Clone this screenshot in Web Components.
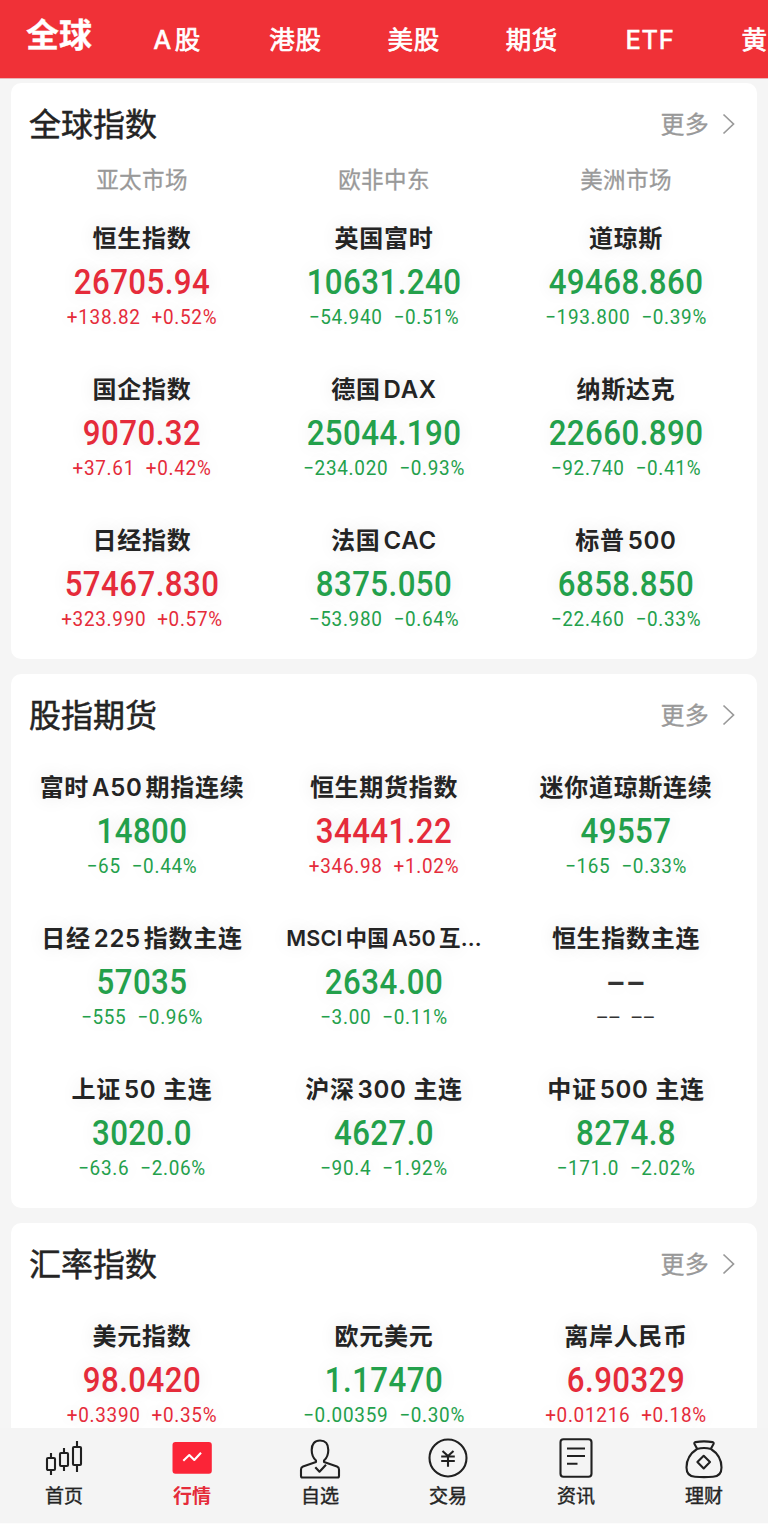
<!DOCTYPE html>
<html lang="zh-CN">
<head>
<meta charset="utf-8">
<meta name="viewport" content="width=device-width">
<title>行情</title>
<style>
body {
    margin: 0;
    font-family: Inter, 'Noto Sans CJK SC', sans-serif;
    color: #242424;
    background: #f5f5f5;
}
</style>
</head>
<body>
<market-page></market-page>
<script>
const UP = '#e52b3a';
const DOWN = '#23a04b';

const tabs = ['全球', 'A股', '港股', '美股', '期货', 'ETF', '黄'];

// name, value, change, percent
const cards = [
    {
        title: '全球指数',
        regions: ['亚太市场', '欧非中东', '美洲市场'],
        rows: [
            ['恒生指数', '26705.94', '+138.82', '+0.52%'],
            ['英国富时', '10631.240', '−54.940', '−0.51%'],
            ['道琼斯', '49468.860', '−193.800', '−0.39%'],
            ['国企指数', '9070.32', '+37.61', '+0.42%'],
            ['德国DAX', '25044.190', '−234.020', '−0.93%'],
            ['纳斯达克', '22660.890', '−92.740', '−0.41%'],
            ['日经指数', '57467.830', '+323.990', '+0.57%'],
            ['法国CAC', '8375.050', '−53.980', '−0.64%'],
            ['标普500', '6858.850', '−22.460', '−0.33%'],
        ],
    },
    {
        title: '股指期货',
        rows: [
            ['富时A50期指连续', '14800', '−65', '−0.44%'],
            ['恒生期货指数', '34441.22', '+346.98', '+1.02%'],
            ['迷你道琼斯连续', '49557', '−165', '−0.33%'],
            ['日经225指数主连', '57035', '−555', '−0.96%'],
            ['MSCI中国A50互...', '2634.00', '−3.00', '−0.11%'],
            ['恒生指数主连', '--', '--', '--'],
            ['上证50 主连', '3020.0', '−63.6', '−2.06%'],
            ['沪深300 主连', '4627.0', '−90.4', '−1.92%'],
            ['中证500 主连', '8274.8', '−171.0', '−2.02%'],
        ],
    },
    {
        title: '汇率指数',
        rows: [
            ['美元指数', '98.0420', '+0.3390', '+0.35%'],
            ['欧元美元', '1.17470', '−0.00359', '−0.30%'],
            ['离岸人民币', '6.90329', '+0.01216', '+0.18%'],
        ],
    },
];

const icons = {
    candles: `<path d="M7 13v5M7 30v5M20 8v5M20 26v5M33 1v6M33 25v7"/><rect x="3" y="18" width="8" height="12" rx="1"/><rect x="16" y="13" width="8" height="13" rx="1"/><rect x="29" y="7" width="8" height="18" rx="1"/>`,
    market: `<rect x=".5" y="2" width="39.300" height="31.700" rx="3" fill="#fb2437" stroke="none"/><path d="M11.300 20.700l6-5.700 5 5 6.700-7.300" stroke="#fff"/>`,
    person: `<path d="M16 20.500c-3.500-3-4.300-6-4.300-10.500 0-6 3-9.500 8.300-9.500s8.300 3.500 8.300 9.500c0 4.500-.8 7.500-4.300 10.500v1.500l13 4.500c1.500.6 2 1.500 2 3V36c0 1-.5 1.500-1.500 1.500h-35C1.500 37.500 1 37 1 36v-6.500c0-1.500.5-2.400 2-3L16 22z"/><path d="M15.300 27.200l4.200 4.500 6.500-7"/>`,
    yen: `<circle cx="20" cy="18" r="18.500"/><path d="M14.500 11l5.500 5 5.500-5M13.200 16.500h13.600M13.200 21h13.600M20 16v10.700"/>`,
    news: `<rect x="4.500" y="-.8" width="31" height="37.500" rx="3"/><path d="M11 8.500h18M11 16h18M11 23.700h10.500"/>`,
    bag: `<path d="M13 8.500L10.500 4c-.5-1 0-1.700 1-1.900 6-1 11-1 17 0 1 .2 1.500.9 1 1.900L27 8.500"/><path d="M13 9c4.500-1.300 9.500-1.300 14 0 7 4.500 10.500 11.500 10.500 18.500 0 6-3 9-8.500 9.300-6 .4-12 .4-18 0C5.500 36.500 2.500 33.500 2.500 27.500 2.500 20.500 6 13.500 13 9z"/><path d="M19.700 15.800l6.300 6.300-6.300 6.300-6.300-6.300z"/>`,
};

const menu = [
    ['candles', '首页'],
    ['market', '行情'],
    ['person', '自选'],
    ['yen', '交易'],
    ['news', '资讯'],
    ['bag', '理财'],
];

class Base extends HTMLElement {
    constructor() {
        super();
        this.attachShadow({ mode: 'open' });
    }

    connectedCallback() {
        this.shadowRoot.innerHTML = this.render();
    }
}

customElements.define(
    'top-tabs',
    class extends Base {
        render() {
            return `
<style>
:host { display: block; height: 79px; overflow: hidden; background: #f03137; border-bottom: 1px solid #e9b5b7; box-sizing: border-box; }
nav { display: flex; height: 100%; }
::slotted(*) {
    flex: 0 0 118.2px; text-align: center; color: #fff;
    font-size: 25.5px; line-height: 80px; letter-spacing: .7px; font-weight: 400;
    -webkit-text-stroke: .7px #fff;
}
::slotted([on]) { font-size: 33px; line-height: 71px; font-weight: 700; letter-spacing: 0; -webkit-text-stroke: .3px #fff; }
/* the strip goes on past the screen, this tab is only half in view */
::slotted(:last-child) { flex-basis: 58px; text-align: right; letter-spacing: 0; }
</style>
<nav><slot></slot></nav>`;
        }
    },
);

customElements.define(
    'index-quote',
    class extends Base {
        render() {
            const [value, change, percent] = ['value', 'change', 'percent'].map(a => this.getAttribute(a));
            const none = value == '--';
            const color = none ? '#333' : change[0] == '+' ? UP : DOWN;
            return `
<style>
:host { display: block; text-align: center; white-space: nowrap; text-shadow: 0 0 18px rgba(0, 0, 0, .1); }
.name { height: 36px; line-height: 38px; font-size: 24px; font-weight: 600; letter-spacing: .7px; }
:host([small]) .name { font-size: 21.500px; line-height: 37px; letter-spacing: .2px; }
.value { height: 51px; font: 500 35.5px/52px Roboto, sans-serif; letter-spacing: .5px; transform: scaleX(.88); color: ${color}; }
.change { display: flex; justify-content: center; gap: 12px; font: 400 21px/21px Roboto, sans-serif; height: 21px; letter-spacing: .8px; transform: scaleX(.9); color: ${color}; }
.none .value { transform: scaleX(1.65); letter-spacing: 0; }
.none .change { transform: scaleX(1.95); line-height: 19px; letter-spacing: .5px; gap: 5px; }
</style>
<div class="${none ? 'none' : ''}">
<div class="name"><slot></slot></div>
<div class="value">${value}</div>
<div class="change"><span>${change}</span><span>${percent}</span></div>
</div>`;
        }
    },
);

customElements.define(
    'index-card',
    class extends Base {
        render() {
            return `
<style>
:host { display: block; background: #fff; border-radius: 10px; padding: 0 10px 29px; }
header { display: flex; justify-content: space-between; align-items: center; height: 82px; padding: 0 12px 0 8px; }
h2 { margin: 2px 0 0; font-size: 32px; line-height: 40px; font-weight: 400; -webkit-text-stroke: .5px; }
.more { display: flex; align-items: center; gap: 13px; font-size: 24px; line-height: 30px; color: #999; letter-spacing: .3px; -webkit-text-stroke: .3px; }
.more span { padding-top: 1px; }
svg { display: block; fill: none; stroke: #999; stroke-width: 1.7; }
.grid { display: grid; grid-template-columns: repeat(3, 1fr); row-gap: 43px; padding-top: 13px; }
</style>
<header>
<h2>${this.getAttribute('heading')}</h2>
<div class="more"><span>更多</span><svg width="13" height="22" viewBox="0 0 13 22"><path d="M1.500 1.500L11.500 11l-10 9.500"/></svg></div>
</header>
<slot name="regions"></slot>
<div class="grid"><slot></slot></div>`;
        }
    },
);

customElements.define(
    'region-row',
    class extends Base {
        render() {
            return `
<style>
:host { display: grid; grid-template-columns: repeat(3, 1fr); height: 30px; margin-bottom: 12px; text-align: center; font-size: 22.500px; line-height: 30px; color: #999; letter-spacing: .4px; -webkit-text-stroke: .3px; }
</style>
<slot></slot>`;
        }
    },
);

customElements.define(
    'menu-item',
    class extends Base {
        render() {
            return `
<style>
:host { display: flex; flex-direction: column; align-items: center; flex: 1; padding-top: 12px; font-size: 19px; line-height: 26px; font-weight: 400; -webkit-text-stroke: .4px; }
:host([on]) { color: #e52b3a; font-weight: 700; -webkit-text-stroke: 0; }
svg { display: block; margin-bottom: 8px; overflow: visible; fill: none; stroke: #202020; stroke-width: 2.1; stroke-linejoin: round; }
</style>
<svg width="40" height="36" viewBox="0 0 40 36">${icons[this.getAttribute('icon')]}</svg>
<span><slot></slot></span>`;
        }
    },
);

customElements.define(
    'bottom-menu',
    class extends Base {
        render() {
            return `
<style>
:host { display: flex; flex: 0 0 95px; background: #f4f4f4; border-bottom: 1px solid #fcfcfc; }
</style>
<slot></slot>`;
        }
    },
);

customElements.define(
    'market-page',
    class extends Base {
        // latin runs inside chinese names get a little air
        name(s) {
            return s.replace(/(^|[\u4e00-\u9fff])([A-Z0-9]+)(?=([\u4e00-\u9fff])?)/g, (m, a, b, c) =>
                `${a}<span style="margin:0 ${c ? 3 : 0}px 0 ${a ? 3 : 0}px">${b}</span>`);
        }

        quote([name, value, change, percent]) {
            return `<index-quote ${name[0] == 'M' ? 'small' : ''} value="${value}" change="${change}" percent="${percent}">${this.name(name)}</index-quote>`;
        }

        card(c) {
            return `<index-card heading="${c.title}">
${c.regions ? `<region-row slot="regions">${c.regions.map(r => `<span>${r}</span>`).join('')}</region-row>` : ''}
${c.rows.map(r => this.quote(r)).join('')}
</index-card>`;
        }

        tab(t, i) {
            const text = t == 'A股' ? 'A<span style="margin-left:3px">股</span>' : t;
            return `<span ${i ? '' : 'on'}>${text}</span>`;
        }

        render() {
            return `
<style>
:host { display: flex; flex-direction: column; height: 1524px; overflow: hidden; }
main { flex: 1; min-height: 0; overflow: hidden; display: flex; flex-direction: column; gap: 15px; padding: 4px 11px 0; }
index-card { flex: none; }
</style>
<top-tabs>${tabs.map(this.tab).join('')}</top-tabs>
<main>${cards.map(c => this.card(c)).join('')}</main>
<bottom-menu>${menu.map(([icon, text]) => `<menu-item icon="${icon}" ${icon == 'market' ? 'on' : ''}>${text}</menu-item>`).join('')}</bottom-menu>`;
        }
    },
);
</script>
</body>
</html>
